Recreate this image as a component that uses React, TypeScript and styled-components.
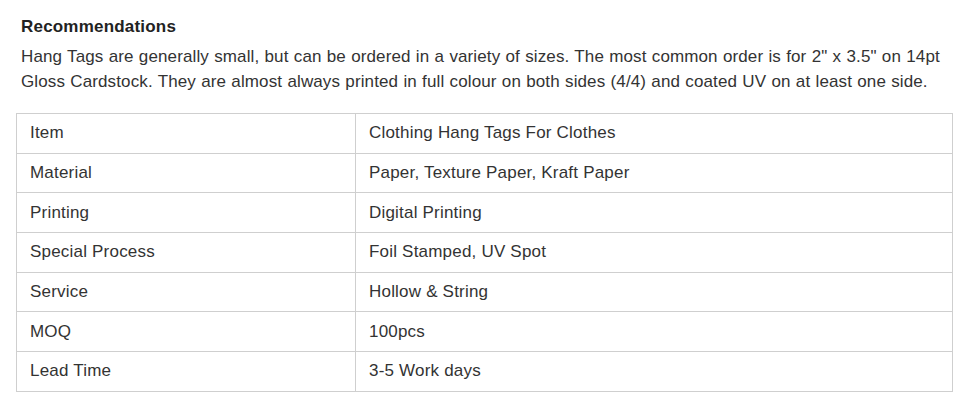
import React from "react";
import styled, { createGlobalStyle } from "styled-components";

const Global = createGlobalStyle`
  html, body { margin: 0; padding: 0; background: #fff; overflow: hidden; }
  body { font-family: "Liberation Sans", Arial, sans-serif; color: #333; }
`;

const Page = styled.div`
  padding: 17px 0 10px 16px;
`;

const Heading = styled.h3`
  margin: 0 0 0 5px;
  font-size: 17px;
  line-height: 20px;
  font-weight: bold;
  letter-spacing: 0.2px;
  color: #222;
`;

const Para = styled.p`
  margin: 7px -6px 19px 5px;
  font-size: 17px;
  line-height: 25px;
  letter-spacing: 0.12px;
  word-spacing: 0.4px;
  color: #333;
`;

const Table = styled.table`
  width: 937px;
  border-collapse: collapse;
  font-size: 17px;
  letter-spacing: 0.2px;
  color: #333;
`;

const Cell = styled.td<{ $first?: boolean }>`
  border: 1px solid #cfcfcf;
  padding: 0 13px;
  height: 38.7px;
  line-height: 20px;
  width: ${(p) => (p.$first ? "312px" : "auto")};
`;

const rows: [string, string][] = [
  ["Item", "Clothing Hang Tags For Clothes"],
  ["Material", "Paper, Texture Paper, Kraft Paper"],
  ["Printing", "Digital Printing"],
  ["Special Process", "Foil Stamped, UV Spot"],
  ["Service", "Hollow & String"],
  ["MOQ", "100pcs"],
  ["Lead Time", "3-5 Work days"],
];

export default function App() {
  return (
    <Page>
      <Global />
      <Heading>Recommendations</Heading>
      <Para>
        Hang Tags are generally small, but can be ordered in a variety of sizes. The most common order is for 2" x 3.5" on 14pt Gloss Cardstock. They are almost always printed in full colour on both sides (4/4) and coated UV on at least one side.
      </Para>
      <Table>
        <tbody>
          {rows.map(([k, v]) => (
            <tr key={k}>
              <Cell $first>{k}</Cell>
              <Cell>{v}</Cell>
            </tr>
          ))}
        </tbody>
      </Table>
    </Page>
  );
}
